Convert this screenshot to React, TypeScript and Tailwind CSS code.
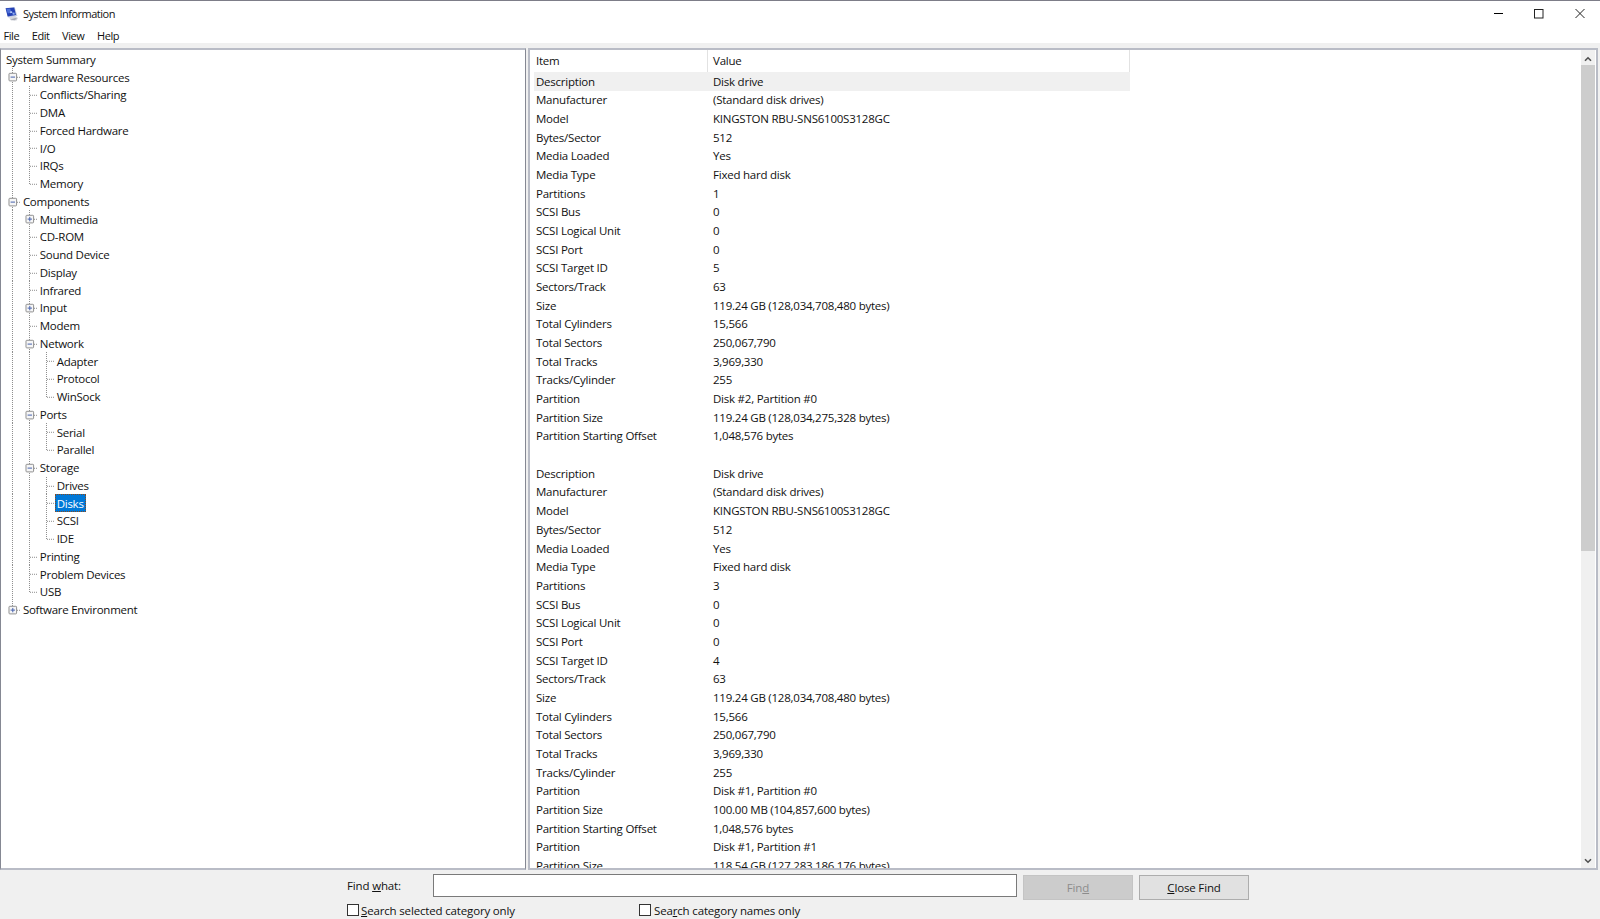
import React, { useState } from "react";
import { clsx } from "clsx";

type Guide = "line" | "tee" | "end" | "plus" | "minus" | "plusEnd";

interface TreeItem {
  label: string;
  guides: Guide[];
}

interface Detail {
  item: string;
  value: string;
}

const tree: TreeItem[] = [
  { label: "System Summary", guides: [] },
  { label: "Hardware Resources", guides: ["minus"] },
  { label: "Conflicts/Sharing", guides: ["line", "tee"] },
  { label: "DMA", guides: ["line", "tee"] },
  { label: "Forced Hardware", guides: ["line", "tee"] },
  { label: "I/O", guides: ["line", "tee"] },
  { label: "IRQs", guides: ["line", "tee"] },
  { label: "Memory", guides: ["line", "end"] },
  { label: "Components", guides: ["minus"] },
  { label: "Multimedia", guides: ["line", "plus"] },
  { label: "CD-ROM", guides: ["line", "tee"] },
  { label: "Sound Device", guides: ["line", "tee"] },
  { label: "Display", guides: ["line", "tee"] },
  { label: "Infrared", guides: ["line", "tee"] },
  { label: "Input", guides: ["line", "plus"] },
  { label: "Modem", guides: ["line", "tee"] },
  { label: "Network", guides: ["line", "minus"] },
  { label: "Adapter", guides: ["line", "line", "tee"] },
  { label: "Protocol", guides: ["line", "line", "tee"] },
  { label: "WinSock", guides: ["line", "line", "end"] },
  { label: "Ports", guides: ["line", "minus"] },
  { label: "Serial", guides: ["line", "line", "tee"] },
  { label: "Parallel", guides: ["line", "line", "end"] },
  { label: "Storage", guides: ["line", "minus"] },
  { label: "Drives", guides: ["line", "line", "tee"] },
  { label: "Disks", guides: ["line", "line", "tee"] },
  { label: "SCSI", guides: ["line", "line", "tee"] },
  { label: "IDE", guides: ["line", "line", "end"] },
  { label: "Printing", guides: ["line", "tee"] },
  { label: "Problem Devices", guides: ["line", "tee"] },
  { label: "USB", guides: ["line", "end"] },
  { label: "Software Environment", guides: ["plusEnd"] },
];

const disk = (partitions: string, target: string): Detail[] => [
  { item: "Description", value: "Disk drive" },
  { item: "Manufacturer", value: "(Standard disk drives)" },
  { item: "Model", value: "KINGSTON RBU-SNS6100S3128GC" },
  { item: "Bytes/Sector", value: "512" },
  { item: "Media Loaded", value: "Yes" },
  { item: "Media Type", value: "Fixed hard disk" },
  { item: "Partitions", value: partitions },
  { item: "SCSI Bus", value: "0" },
  { item: "SCSI Logical Unit", value: "0" },
  { item: "SCSI Port", value: "0" },
  { item: "SCSI Target ID", value: target },
  { item: "Sectors/Track", value: "63" },
  { item: "Size", value: "119.24 GB (128,034,708,480 bytes)" },
  { item: "Total Cylinders", value: "15,566" },
  { item: "Total Sectors", value: "250,067,790" },
  { item: "Total Tracks", value: "3,969,330" },
  { item: "Tracks/Cylinder", value: "255" },
];

const details: Detail[] = [
  ...disk("1", "5"),
  { item: "Partition", value: "Disk #2, Partition #0" },
  { item: "Partition Size", value: "119.24 GB (128,034,275,328 bytes)" },
  { item: "Partition Starting Offset", value: "1,048,576 bytes" },
  { item: "", value: "" },
  ...disk("3", "4"),
  { item: "Partition", value: "Disk #1, Partition #0" },
  { item: "Partition Size", value: "100.00 MB (104,857,600 bytes)" },
  { item: "Partition Starting Offset", value: "1,048,576 bytes" },
  { item: "Partition", value: "Disk #1, Partition #1" },
  { item: "Partition Size", value: "118.54 GB (127,283,186,176 bytes)" },
];

const AppIcon = () => (
  <svg width="14" height="14" viewBox="0 0 14 14">
    <path d="M4 10.5 10 9l3 2-1.5 2.5H6z" fill="#d5d7dd" />
    <path d="M.6 1 9.8.2 12.4 9 3 10.6z" fill="#c3cbe0" />
    <path d="M.6 1.2 9.2.6 11 8 2.6 9.6z" fill="#2340b4" />
    <path d="M1.4 2 5.2 1.6l1.2 4-3.6.8z" fill="#4f70d8" />
    <path d="M5 4.6l2-.4.4 1.6-2 .4z" fill="#b9cdfa" />
    <path d="M7.4 5.8l2-.4.5 2-2.1.4z" fill="#8fb0f4" />
    <path d="M5 12.4 10.4 11l1.6.6-2.4 1.6z" fill="#a4a8b3" />
  </svg>
);

// One 17px column of the tree's dotted connector lines
const GuideCell = ({ type }: { type: Guide }) => {
  const plus = type === "plus" || type === "plusEnd";
  const box = plus || type === "minus";
  const half = type === "end" || type === "plusEnd";
  return (
    <svg className="h-full w-[16.9px] shrink-0" viewBox="0 0 16.9 17.76">
      <path d={half ? "M8.5 0V9" : "M8.5 0V17.76"} stroke="#8c8c8c" strokeDasharray="1 1" />
      {type !== "line" && <path d="M9 9.3H17" stroke="#8c8c8c" strokeDasharray="1 1" />}
      {box && (
        <>
          <rect x="5" y="5.3" width="7.6" height="7.6" rx="0.8" fill="#f6f6f6" stroke="#919191" />
          <path d="M6.6 9.1h4.4" stroke="#4660ad" />
          {plus && <path d="M8.8 6.9v4.4" stroke="#4660ad" />}
        </>
      )}
    </svg>
  );
};

const Scrollbar = () => (
  <div className="mr-px flex w-[14px] shrink-0 flex-col bg-[#f0f0f0]">
    <div className="flex h-[15px] shrink-0 items-center justify-center pt-[3px]">
      <svg width="8" height="6" viewBox="0 0 8 6" fill="none">
        <path d="M1 4.8 4 1.8l3 3" stroke="#505050" strokeWidth="1.6" />
      </svg>
    </div>
    <div className="h-[486px] shrink-0 bg-[#cdcdcd]" />
    <div className="flex-1" />
    <div className="flex h-[15px] shrink-0 items-center justify-center">
      <svg width="8" height="6" viewBox="0 0 8 6" fill="none">
        <path d="M1 1.2l3 3 3-3" stroke="#505050" strokeWidth="1.6" />
      </svg>
    </div>
  </div>
);

const App = () => {
  const [selected, setSelected] = useState("Disks");
  const [find, setFind] = useState("");

  return (
    <div className="flex h-[919px] w-[1600px] flex-col overflow-hidden border-t border-[#7d7d88] bg-[#f0f0f0] font-['Open_Sans','Noto_Sans',sans-serif] text-[11.5px] tracking-[-0.23px] whitespace-nowrap text-[#111]">
      <header className="flex h-[25px] shrink-0 items-center bg-white pl-[5px]">
        <AppIcon />
        <span className="ml-1 pt-px text-[11px] tracking-[-0.5px]">System Information</span>
        <div className="ml-auto flex items-center pr-[15px]">
          <svg width="91" height="12" viewBox="0 0 91 12" fill="none" stroke="#222">
            <path d="M0 5.5h9" stroke="#000" />
            <rect x="40.5" y="1.5" width="8.5" height="8.5" />
            <path d="M81.5 1l9 9m0-9-9 9" />
          </svg>
        </div>
      </header>
      <nav className="flex h-[17px] shrink-0 items-center gap-[12.5px] bg-white pt-[3px] pl-[3.5px] text-[11px] tracking-[-0.42px]">
        <span>File</span>
        <span>Edit</span>
        <span>View</span>
        <span>Help</span>
      </nav>

      <main className="mt-[5px] flex h-[822px] shrink-0">
        <section className="w-[526px] shrink-0 overflow-hidden border-x border-y-2 border-x-[#858893] border-y-[#b9bcc6] bg-white pt-[0.5px] tracking-[-0.26px]">
          {tree.map((node) => (
            <div
              key={node.label}
              className={clsx("flex h-[17.76px] items-center", node.guides.length > 0 ? "pl-[3px]" : "pl-[5px]")}
            >
              {node.guides.map((g, i) => (
                <GuideCell key={i} type={g} />
              ))}
              <span
                onClick={() => setSelected(node.label)}
                className={clsx(
                  "flex h-full items-center",
                  node.guides.length > 0 && "px-[2px]",
                  node.label === selected &&
                    "bg-[#0078d7] text-white outline-1 -outline-offset-1 outline-dotted outline-[#8a4a1c]"
                )}
              >
                {node.label}
              </span>
            </div>
          ))}
        </section>

        <section className="ml-[2px] flex w-[1070px] shrink-0 overflow-hidden border-2 border-[#b9bcc6] bg-white">
          <div className="flex-1 pl-[4px]">
            <div className="flex h-[22px] w-[596px] items-center border-r border-[#e2e2e2]">
              <span className="flex h-full w-[174px] items-center border-r border-[#e2e2e2] pl-[2px]">Item</span>
              <span className="pl-[5px]">Value</span>
            </div>
            {details.map((row, i) => (
              <div key={i} className={clsx("flex h-[18.68px] w-[596px] items-center", i === 0 && "bg-[#f0f0f0]")}>
                <span className="w-[174px] pl-[2px]">{row.item}</span>
                <span className="pl-[5px]">{row.value}</span>
              </div>
            ))}
          </div>
          <Scrollbar />
        </section>
      </main>

      <footer className="flex flex-1 flex-col pl-[347px] tracking-[-0.16px]">
        <div className="flex pt-[4px]">
          <label htmlFor="find" className="mt-[3px] w-[86px]">
            Find <u>w</u>hat:
          </label>
          <input
            id="find"
            value={find}
            onChange={(e) => setFind(e.target.value)}
            className="h-[23px] w-[584px] border border-[#7a7a7a] bg-white px-1 outline-none"
          />
          <button className="mt-px ml-[6px] h-[25px] w-[110px] border border-[#c4c4c4] bg-[#cccccc] text-[#8c8c8c]">
            Fin<u>d</u>
          </button>
          <button className="mt-px ml-[6px] h-[25px] w-[110px] border border-[#adadad] bg-[#e1e1e1]">
            <u>C</u>lose Find
          </button>
        </div>
        <div className="mt-[1.5px] flex items-center">
          <span className="h-[12px] w-[12px] border border-[#333] bg-white" />
          <span className="ml-[2px] w-[278px]">
            <u>S</u>earch selected category only
          </span>
          <span className="h-[12px] w-[12px] border border-[#333] bg-white" />
          <span className="ml-[3px]">
            Sea<u>r</u>ch category names only
          </span>
        </div>
      </footer>
    </div>
  );
};

export default App;
